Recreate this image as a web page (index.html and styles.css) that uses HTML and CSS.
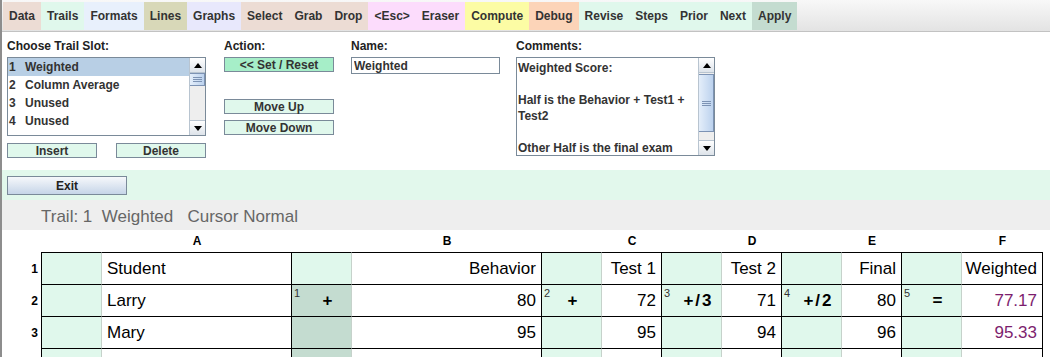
FILE: index.html
```html
<!DOCTYPE html>
<html lang="en">
<head>
    <meta charset="UTF-8">
    <meta name="viewport" content="width=device-width, initial-scale=1.0">
    <title>Trails</title>
    <link rel="stylesheet" href="styles.css">
</head>
<body>
<div class="frame">
    <nav class="menubar">
        <span class="menu tan">Data</span>
        <span class="menu mint">Trails</span>
        <span class="menu sky">Formats</span>
        <span class="menu olive">Lines</span>
        <span class="menu lilac">Graphs</span>
        <span class="menu tan">Select</span>
        <span class="menu tan">Grab</span>
        <span class="menu tan">Drop</span>
        <span class="menu pink">&lt;Esc&gt;</span>
        <span class="menu pink">Eraser</span>
        <span class="menu yellow">Compute</span>
        <span class="menu peach">Debug</span>
        <span class="menu mint">Revise</span>
        <span class="menu mint">Steps</span>
        <span class="menu mint">Prior</span>
        <span class="menu mint">Next</span>
        <span class="menu sage">Apply</span>
    </nav>

    <section class="editor">
        <div class="col slot">
            <div class="label">Choose Trail Slot:</div>
            <div class="listbox">
                <ul class="items">
                    <li class="selected"><span class="num">1</span>Weighted</li>
                    <li><span class="num">2</span>Column Average</li>
                    <li><span class="num">3</span>Unused</li>
                    <li><span class="num">4</span>Unused</li>
                </ul>
                <div class="scrollbar">
                    <div class="arrow"><svg width="8" height="5"><polygon points="0,5 4,0 8,5" fill="#000"/></svg></div>
                    <div class="track">
                        <div class="thumb short"><svg width="9" height="5"><path d="M0 0.5H9M0 2.5H9M0 4.5H9" stroke="#7d93b4" stroke-width="1"/></svg></div>
                    </div>
                    <div class="arrow down"><svg width="8" height="5"><polygon points="0,0 8,0 4,5" fill="#000"/></svg></div>
                </div>
            </div>
            <div class="button-row">
                <button class="btn small">Insert</button>
                <button class="btn small">Delete</button>
            </div>
        </div>

        <div class="col action">
            <div class="label">Action:</div>
            <button class="btn wide primary">&lt;&lt; Set / Reset</button>
            <button class="btn wide up">Move Up</button>
            <button class="btn wide down">Move Down</button>
        </div>

        <div class="col name">
            <div class="label">Name:</div>
            <input class="textfield" type="text" value="Weighted">
        </div>

        <div class="col comments">
            <div class="label">Comments:</div>
            <div class="textarea">
                <div class="text">
                    <div>Weighted Score:</div>
                    <div>&nbsp;</div>
                    <div>Half is the Behavior + Test1 +</div>
                    <div>Test2</div>
                    <div>&nbsp;</div>
                    <div>Other Half is the final exam</div>
                </div>
                <div class="scrollbar">
                    <div class="arrow"><svg width="8" height="5"><polygon points="0,5 4,0 8,5" fill="#000"/></svg></div>
                    <div class="track">
                        <div class="thumb tall"><svg width="9" height="5"><path d="M0 0.5H9M0 2.5H9M0 4.5H9" stroke="#7d93b4" stroke-width="1"/></svg></div>
                    </div>
                    <div class="arrow down"><svg width="8" height="5"><polygon points="0,0 8,0 4,5" fill="#000"/></svg></div>
                </div>
            </div>
        </div>
    </section>

    <div class="exitbar">
        <button class="exit">Exit</button>
    </div>

    <div class="status">Trail: 1  Weighted   Cursor Normal</div>

    <div class="sheet">
        <div class="heads">
            <span class="corner"></span><span>A</span><span></span><span>B</span><span></span><span>C</span><span></span><span>D</span><span></span><span>E</span><span></span><span>F</span>
        </div>

        <div class="row first">
            <div class="rownum">1</div>
            <div class="cell op lead"></div>
            <div class="cell val left">Student</div>
            <div class="cell op"></div>
            <div class="cell val">Behavior</div>
            <div class="cell op"></div>
            <div class="cell val">Test 1</div>
            <div class="cell op"></div>
            <div class="cell val">Test 2</div>
            <div class="cell op"></div>
            <div class="cell val">Final</div>
            <div class="cell op"></div>
            <div class="cell val">Weighted</div>
        </div>

        <div class="row">
            <div class="rownum">2</div>
            <div class="cell op lead"></div>
            <div class="cell val left">Larry</div>
            <div class="cell op active"><sup class="step">1</sup><span class="sym">+</span></div>
            <div class="cell val">80</div>
            <div class="cell op"><sup class="step">2</sup><span class="sym plain">+</span></div>
            <div class="cell val">72</div>
            <div class="cell op"><sup class="step">3</sup><span class="sym">+/3</span></div>
            <div class="cell val">71</div>
            <div class="cell op"><sup class="step">4</sup><span class="sym">+/2</span></div>
            <div class="cell val">80</div>
            <div class="cell op"><sup class="step">5</sup><span class="sym">=</span></div>
            <div class="cell val result">77.17</div>
        </div>

        <div class="row">
            <div class="rownum">3</div>
            <div class="cell op lead"></div>
            <div class="cell val left">Mary</div>
            <div class="cell op active"></div>
            <div class="cell val">95</div>
            <div class="cell op"></div>
            <div class="cell val">95</div>
            <div class="cell op"></div>
            <div class="cell val">94</div>
            <div class="cell op"></div>
            <div class="cell val">96</div>
            <div class="cell op"></div>
            <div class="cell val result">95.33</div>
        </div>

        <div class="row">
            <div class="rownum"></div>
            <div class="cell op lead"></div>
            <div class="cell val left"></div>
            <div class="cell op active"></div>
            <div class="cell val"></div>
            <div class="cell op"></div>
            <div class="cell val"></div>
            <div class="cell op"></div>
            <div class="cell val"></div>
            <div class="cell op"></div>
            <div class="cell val"></div>
            <div class="cell op"></div>
            <div class="cell val"></div>
        </div>
    </div>
</div>
</body>
</html>
```

FILE: styles.css
```css
body {
    margin: 0;
    font-family: 'Liberation Sans', Arial, sans-serif;
    background: #fff;
    overflow: hidden;
}

.frame {
    border-left: 2px solid #8d8d8d;
    height: 357px;
    overflow: hidden;
}

/* menu bar */

.menubar {
    display: flex;
    height: 29px;
    padding: 2px 0 0 1px;
    background: linear-gradient(#f8f8f8, #e3e3e3);
    border-bottom: 1px solid #c2c2c2;
}

.menu {
    height: 28px;
    line-height: 28px;
    padding: 0 6px;
    font-size: 12px;
    font-weight: bold;
    color: #333;
}

.tan { background-color: #ecdcd4; }
.mint { background-color: #e0f8ec; }
.sky { background-color: #e8f0fc; }
.olive { background-color: #d8d8b8; }
.lilac { background-color: #e8e8fc; }
.pink { background-color: #fcdcfc; }
.yellow { background-color: #fcfca4; }
.peach { background-color: #fcd4b8; }
.sage { background-color: #c4dcd0; }

/* trail editor */

.editor {
    display: flex;
    height: 138px;
    box-sizing: border-box;
    padding: 7px 0 0 5px;
    background: #fff;
}

.col {
    display: flex;
    flex-direction: column;
}

.slot { width: 199px; }
.action { width: 110px; margin-left: 18px; }
.name { width: 149px; margin-left: 17px; }
.comments { width: 199px; margin-left: 16px; }

.label {
    height: 14px;
    line-height: 14px;
    margin-bottom: 4px;
    font-size: 12px;
    font-weight: bold;
    color: #222;
}

.listbox {
    display: flex;
    height: 79px;
    box-sizing: border-box;
    border: 1px solid #7a8a99;
}

.items {
    flex: 1;
    list-style: none;
    margin: 0;
    padding: 0;
}

.items li {
    height: 18px;
    line-height: 18px;
    padding-left: 1px;
    font-size: 12px;
    font-weight: bold;
    color: #333;
}

.items li.selected {
    background-color: #b8cfe5;
}

.num {
    display: inline-block;
    width: 16px;
}

.scrollbar {
    width: 15px;
    display: flex;
    flex-direction: column;
    border-left: 1px solid #b8c4d0;
    background: #eeeeee;
}

.arrow {
    height: 15px;
    flex: none;
    box-sizing: border-box;
    display: flex;
    align-items: center;
    justify-content: center;
    background: linear-gradient(#ffffff, #dde3ea);
    border-bottom: 1px solid #b8c4d0;
}

.arrow.down {
    border-bottom: none;
    border-top: 1px solid #b8c4d0;
}

.track {
    flex: 1;
}

.thumb {
    box-sizing: border-box;
    display: flex;
    align-items: center;
    justify-content: center;
    background: linear-gradient(90deg, #e4eefa, #bcd2ee);
    border: 1px solid #7d93b4;
    border-left: none;
}

.thumb.short { height: 13px; }
.thumb.tall { height: 58px; margin-top: 1px; }

.btn {
    display: block;
    height: 15px;
    box-sizing: border-box;
    padding: 0;
    border: 1px solid #7a8a99;
    background-color: #e0f8ec;
    font-family: inherit;
    font-size: 12px;
    font-weight: bold;
    line-height: 12px;
    color: #333;
}

.button-row {
    display: flex;
    justify-content: space-between;
    margin-top: 7px;
}

.btn.small { width: 90px; }
.btn.wide { width: 110px; }
.btn.primary { background-color: #a6eec8; }
.btn.up { margin-top: 27px; }
.btn.down { margin-top: 6px; }

.textfield {
    width: 149px;
    height: 17px;
    box-sizing: border-box;
    margin: 0;
    padding: 0 2px;
    border: 1px solid #7a8a99;
    font-family: inherit;
    font-size: 12px;
    font-weight: bold;
    color: #333;
}

.textarea {
    display: flex;
    height: 99px;
    box-sizing: border-box;
    border: 1px solid #7a8a99;
}

.text {
    flex: 1;
    padding: 2px 0 0 1px;
    font-size: 12px;
    font-weight: bold;
    line-height: 16px;
    color: #333;
    overflow: hidden;
}

/* exit and status */

.exitbar {
    height: 30px;
    box-sizing: border-box;
    padding: 6px 0 0 5px;
    background-color: #e2f8ec;
}

.exit {
    display: block;
    width: 120px;
    height: 19px;
    padding: 0;
    border: 1px solid #7a8a99;
    background: linear-gradient(#f6f8fb, #c6d5e8);
    font-family: inherit;
    font-size: 12px;
    font-weight: bold;
    color: #222;
}

.status {
    height: 30px;
    box-sizing: border-box;
    padding: 7px 0 0 39px;
    line-height: 20px;
    background-color: #eeeeee;
    font-size: 17px;
    color: #666;
    white-space: pre;
}

/* spreadsheet */

.sheet {
    background: #fff;
}

.heads,
.row {
    display: grid;
    grid-template-columns: 39px 61px 190px 60px 190px 60px 60px 60px 60px 60px 60px 60px 81px;
}

.heads {
    height: 22px;
    line-height: 22px;
    text-align: center;
    font-size: 12px;
    font-weight: bold;
    color: #000;
}

.heads .corner {
    grid-column: 1 / 3;
}

.row {
    height: 32px;
}

.row.first {
    height: 33px;
}

.row.first .cell {
    border-top: 1px solid #000;
}

.rownum {
    display: flex;
    align-items: center;
    justify-content: flex-end;
    padding-right: 3px;
    font-size: 12px;
    font-weight: bold;
}

.cell {
    position: relative;
    box-sizing: border-box;
    display: flex;
    align-items: center;
    border-right: 1px solid #000;
    border-bottom: 1px solid #000;
    font-size: 17px;
    color: #000;
}

.cell.op {
    justify-content: center;
    padding-left: 14px;
    background-color: #e0f8ec;
    border-right-color: #c6d2cb;
}

.cell.op.lead {
    border-left: 1px solid #000;
}

.cell.op.active {
    background-color: #c4dcd0;
}

.cell.val {
    justify-content: flex-end;
    padding: 0 5px;
}

.cell.val.left {
    justify-content: flex-start;
}

.cell.val.result {
    color: #7d1e6e;
}

.step {
    position: absolute;
    top: 3px;
    left: 2px;
    font-size: 11px;
    line-height: 11px;
    color: #333;
}

.sym {
    font-size: 17px;
    font-weight: bold;
    letter-spacing: 2px;
}

.sym.plain {
    padding-right: 10px;
}
```
